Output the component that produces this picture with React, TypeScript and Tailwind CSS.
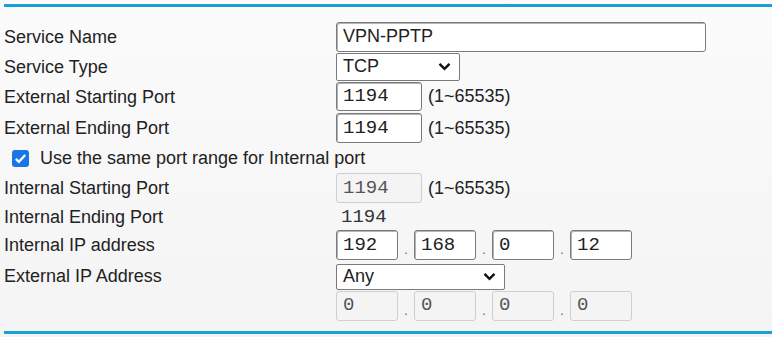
import type { ReactNode } from "react";

const sans = "font-['Liberation_Sans',Arial,sans-serif]";
const mono = "font-['Liberation_Mono','Courier_New',monospace]";

function Row({
  label,
  className,
  children,
}: {
  label?: string;
  className: string;
  children?: ReactNode;
}) {
  return (
    <div className={`flex items-center ${className}`}>
      <div className="w-[332px] shrink-0 text-[18px] leading-none text-[#222]">
        {label}
      </div>
      <div className="flex items-center">{children}</div>
    </div>
  );
}

function Field({
  value,
  className,
  monoText = false,
  disabled = false,
}: {
  value: string;
  className: string;
  monoText?: boolean;
  disabled?: boolean;
}) {
  return (
    <div
      className={`flex items-center rounded-[3px] border px-[6px] ${
        disabled
          ? "border-[#cfcfcf] bg-[#f4f4f4] text-[#555]"
          : "border-[#7a7a7a] bg-white text-[#222] shadow-[inset_1px_1px_0_#b5b5b5]"
      } ${monoText ? `${mono} text-[19px]` : "text-[18px]"} ${className}`}>
      {value}
    </div>
  );
}

function Chevron() {
  return (
    <svg width="13" height="9" viewBox="0 0 13 9" className="shrink-0">
      <path
        d="M1.5 1.8 L6.5 6.8 L11.5 1.8"
        fill="none"
        stroke="#111"
        strokeWidth="2.4"
      />
    </svg>
  );
}

function Select({ value, className }: { value: string; className: string }) {
  return (
    <div
      className={`flex items-center justify-between rounded-[2px] border border-[#7a7a7a] bg-white pl-[6px] pr-[8px] text-[18px] text-[#222] ${className}`}>
      <span>{value}</span>
      <Chevron />
    </div>
  );
}

function IpRow({ parts, disabled = false }: { parts: string[]; disabled?: boolean }) {
  return (
    <div className="flex items-center">
      {parts.map((p, i) => (
        <div key={i} className="flex items-center">
          {i > 0 && (
            <span className="w-[16px] pt-[8px] text-center text-[14px] leading-none text-[#777]">
              .
            </span>
          )}
          <Field
            value={p}
            monoText
            disabled={disabled}
            className="h-[30px] w-[62px]"
          />
        </div>
      ))}
    </div>
  );
}

const range = <span className="ml-[6px] text-[18px] text-[#222]">(1~65535)</span>;

export default function App() {
  return (
    <div
      className={`h-[337px] w-[772px] overflow-hidden bg-gradient-to-b from-[#fbfbfb] to-[#f4f4f4] pl-[4px] pt-[4px] ${sans}`}>
      <div className="h-[3px] bg-[#17a1d4]" />
      <div className="flex flex-col pt-[14px]">
        <Row label="Service Name" className="h-[31px]">
          <Field value="VPN-PPTP" className="h-[30px] w-[370px]" />
        </Row>
        <Row label="Service Type" className="h-[29px]">
          <Select value="TCP" className="h-[28px] w-[124px]" />
        </Row>
        <Row label="External Starting Port" className="h-[31px]">
          <Field value="1194" monoText className="h-[29px] w-[86px]" />
          {range}
        </Row>
        <Row label="External Ending Port" className="h-[32px]">
          <Field value="1194" monoText className="h-[30px] w-[86px]" />
          {range}
        </Row>
        <div className="flex h-[28px] items-center pl-[8px]">
          <div className="flex h-[17px] w-[17px] items-center justify-center rounded-[3px] bg-[#1a76e4]">
            <svg width="13" height="11" viewBox="0 0 13 11">
              <path
                d="M1.8 5.8 L4.9 8.8 L11.2 2"
                fill="none"
                stroke="#fff"
                strokeWidth="2.3"
              />
            </svg>
          </div>
          <span className="ml-[11px] text-[18px] leading-none text-[#222]">
            Use the same port range for Internal port
          </span>
        </div>
        <Row label="Internal Starting Port" className="h-[32px]">
          <Field value="1194" monoText disabled className="h-[30px] w-[86px]" />
          {range}
        </Row>
        <Row label="Internal Ending Port" className="h-[25px]">
          <span className={`${mono} pl-[5px] pt-[2px] text-[19px] text-[#333]`}>1194</span>
        </Row>
        <Row label="Internal IP address" className="h-[32px]">
          <IpRow parts={["192", "168", "0", "12"]} />
        </Row>
        <Row label="External IP Address" className="h-[29px]">
          <Select value="Any" className="mt-[2px] h-[26px] w-[169px]" />
        </Row>
        <Row className="h-[31px]">
          <IpRow parts={["0", "0", "0", "0"]} disabled />
        </Row>
      </div>
      <div className="mt-[10px] h-[3px] bg-[#17a1d4]" />
    </div>
  );
}
